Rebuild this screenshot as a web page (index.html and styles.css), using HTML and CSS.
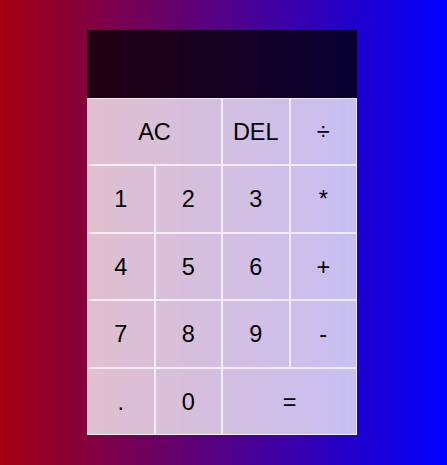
FILE: index.html
```html
<!DOCTYPE html>
<html lang="en">
<head>
<meta charset="utf-8">
<title>Calculator</title>
<link rel="stylesheet" href="styles.css">
</head>
<body>
<div class="calculator-grid">
  <div class="output">
    <div class="previous-operand"></div>
    <div class="current-operand"></div>
  </div>
  <button class="span-two">AC</button>
  <button>DEL</button>
  <button>÷</button>
  <button>1</button>
  <button>2</button>
  <button>3</button>
  <button>*</button>
  <button>4</button>
  <button>5</button>
  <button>6</button>
  <button>+</button>
  <button>7</button>
  <button>8</button>
  <button>9</button>
  <button>-</button>
  <button>.</button>
  <button>0</button>
  <button class="span-two">=</button>
</div>
</body>
</html>
```
FILE: styles.css
```css
*, *::before, *::after {
  box-sizing: border-box;
  font-family: "Liberation Sans", Arial, sans-serif;
  font-weight: normal;
}

html {
  height: 100%;
}

body {
  margin: 0;
  padding: 0 3px 0 0;
  min-height: 100%;
  background: linear-gradient(to right, #a5000f, #0000ff);
}

.calculator-grid {
  display: grid;
  justify-content: center;
  padding-top: 30px;
  grid-template-columns: repeat(4, 67.5px);
  grid-template-rows: 67.5px repeat(5, 67.5px);
}

.calculator-grid > button {
  cursor: pointer;
  font-size: 23.5px;
  color: #000;
  border: 1px solid rgba(255, 255, 255, 0.7);
  outline: none;
  background-color: rgba(255, 255, 255, 0.75);
  padding: 2px 0 0;
}

.span-two {
  grid-column: span 2;
}

.output {
  grid-column: 1 / -1;
  background-color: rgba(0, 0, 0, 0.75);
  display: flex;
  flex-direction: column;
  align-items: flex-end;
  justify-content: space-around;
  padding: 10px;
  word-wrap: break-word;
  word-break: break-all;
}

.previous-operand {
  color: rgba(255, 255, 255, 0.75);
  font-size: 16px;
}

.current-operand {
  color: #fff;
  font-size: 24px;
}
```
